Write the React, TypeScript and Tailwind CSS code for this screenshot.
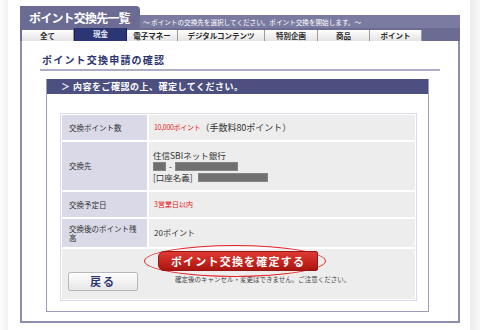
import React from "react";

const tabs = [
  { label: "全て", w: "w-[52px]" },
  { label: "現金", w: "w-[53px]", active: true },
  { label: "電子マネー", w: "w-[51px]" },
  { label: "デジタルコンテンツ", w: "w-[87px]" },
  { label: "特別企画", w: "w-[53px]" },
  { label: "商品", w: "w-[52px]" },
  { label: "ポイント", w: "w-[52px]" },
];

function Redact({ w }: { w: string }) {
  return <span className={`inline-block h-[9px] bg-[#707070] border border-[#858585] align-middle ${w}`} />;
}

export default function App() {
  return (
    <div
      className="w-[480px] h-[330px] bg-white flex overflow-hidden text-[#333]"
      style={{ fontFamily: '"Noto Sans CJK JP", "Noto Sans", sans-serif' }}
    >
      <div className="w-[8px] h-full bg-gradient-to-r from-[#fefefe] to-[#f0f0f0]" />
      <div className="w-[462px] pl-[12px] pt-[6px]">
        <div className="w-[440px]">
          {/* header */}
          <div className="flex items-end h-[22px]">
            <div className="w-[120px] h-[22px] bg-[#6b6b93] rounded-tr-[4px] text-white font-bold text-[12px] tracking-[-0.8px] leading-[22px] pl-[9px] pt-[1px]">
              ポイント交換先一覧
            </div>
            <div className="flex-1 h-[13px] bg-[#7b7ba2] text-white text-[6.6px] leading-[14px] pl-[3px] whitespace-nowrap">
              ～ ポイントの交換先を選択してください。ポイント交換を開始します。～
            </div>
          </div>
          <div className="h-[13px] bg-[#6b6b93] flex items-end pl-[2px]">
            {tabs.map((t) =>
              t.active ? (
                <div
                  key={t.label}
                  className={`${t.w} h-[13px] bg-[#2c3674] text-[#e6e6f4] text-[7.5px] font-bold leading-[12px] text-center border-x border-[#1c2456]`}
                >
                  {t.label}
                </div>
              ) : (
                <div
                  key={t.label}
                  className={`${t.w} h-[11px] bg-gradient-to-b from-white to-[#e4e4e4] text-[#2a2a2a] text-[7.5px] font-bold leading-[11px] text-center border-r border-[#9a9a9a] whitespace-nowrap overflow-hidden`}
                >
                  {t.label}
                </div>
              )
            )}
          </div>
          {/* frame */}
          <div className="h-[282px] flex flex-col pt-[12px] border-x-2 border-b-2 border-[#8e8eae] bg-white">
            <div className="ml-[18px] w-[400px] pl-[2px] pb-[2px] border-b-2 border-[#aeaecc] text-[10px] font-bold tracking-[1.2px] leading-[14px] text-[#2c3470]">
              ポイント交換申請の確認
            </div>
            <div className="ml-[24px] mt-[8px] w-[383px] border-x border-b border-[#9a9abc]">
              <div className="h-[15px] bg-[#4c4f80] text-white text-[9px] font-bold tracking-[0.5px] leading-[15px] pl-[14px]">
                ＞ 内容をご確認の上、確定してください。
              </div>
              <div className="pl-[13px] pt-[19px] pb-[10px]">
                <div className="w-[357px] border border-[#dcdce8] p-[1px] bg-white grid grid-cols-[85px_1fr] gap-[2px] text-[7.5px]">
                  <div className="h-[25px] bg-[#d9d9e7] pl-[7px] flex items-center">交換ポイント数</div>
                  <div className="h-[25px] bg-[#ededed] pl-[5px] flex items-center">
                    <span className="text-[#e41818] text-[7px] tracking-[-0.3px]">10,000ポイント</span>
                    <span className="text-[9px] text-[#333]">（手数料80ポイント）</span>
                  </div>
                  <div className="h-[48px] bg-[#d9d9e7] pl-[7px] flex items-center">交換先</div>
                  <div className="h-[48px] bg-[#ededed] pl-[4px] flex flex-col justify-center text-[8.5px] leading-[12px]">
                    <div>住信SBIネット銀行</div>
                    <div className="flex items-center gap-[3px]">
                      <Redact w="w-[13px]" />
                      <span className="leading-[10px]">-</span>
                      <Redact w="w-[63px]" />
                    </div>
                    <div className="flex items-center gap-[5px]">
                      <span>[口座名義]</span>
                      <Redact w="w-[70px]" />
                    </div>
                  </div>
                  <div className="h-[25px] bg-[#d9d9e7] pl-[7px] flex items-center">交換予定日</div>
                  <div className="h-[25px] bg-[#ededed] pl-[5px] flex items-center text-[#e41818] text-[7px]">3営業日以内</div>
                  <div className="h-[28px] bg-[#d9d9e7] pl-[7px] pr-[4px] flex items-center leading-[9px]">交換後のポイント残高</div>
                  <div className="h-[28px] bg-[#ededed] pl-[5px] flex items-center text-[8px]">20ポイント</div>
                  <div className="col-span-2 h-[50px] bg-[#ededed] flex items-start">
                    <div className="ml-[6px] mt-[23px] w-[70px] h-[19px] rounded-[2px] border border-[#b8b8b8] bg-gradient-to-b from-white to-[#e6e6e6] text-[#2c3470] text-[11px] font-bold leading-[17px] text-center tracking-[2px]">
                      戻る
                    </div>
                    <div className="ml-[20px] mt-[2px] flex flex-col">
                      <div className="relative w-[160px] h-[20px]">
                        <div className="absolute left-[-14px] top-[-6px] w-[182px] h-[32px] rounded-[50%] border-[1.5px] border-[#e5262a]" />
                        <div className="absolute inset-0 rounded-l-[6px] rounded-r-[2px] bg-gradient-to-b from-[#dc3a33] via-[#c82620] to-[#a81612] border border-[#9a1410] text-white text-[11px] font-bold tracking-[1.2px] leading-[18px] text-center">
                          ポイント交換を確定する
                        </div>
                      </div>
                      <div className="ml-[17px] mt-[4px] text-[6.5px] leading-[9px] text-[#444] whitespace-nowrap">
                        確定後のキャンセル・変更はできません。ご注意ください。
                      </div>
                    </div>
                  </div>
                </div>
              </div>
            </div>
          </div>
        </div>
      </div>
      <div className="w-[10px] h-full bg-gradient-to-r from-[#ececec] to-[#f8f8f8]" />
    </div>
  );
}
